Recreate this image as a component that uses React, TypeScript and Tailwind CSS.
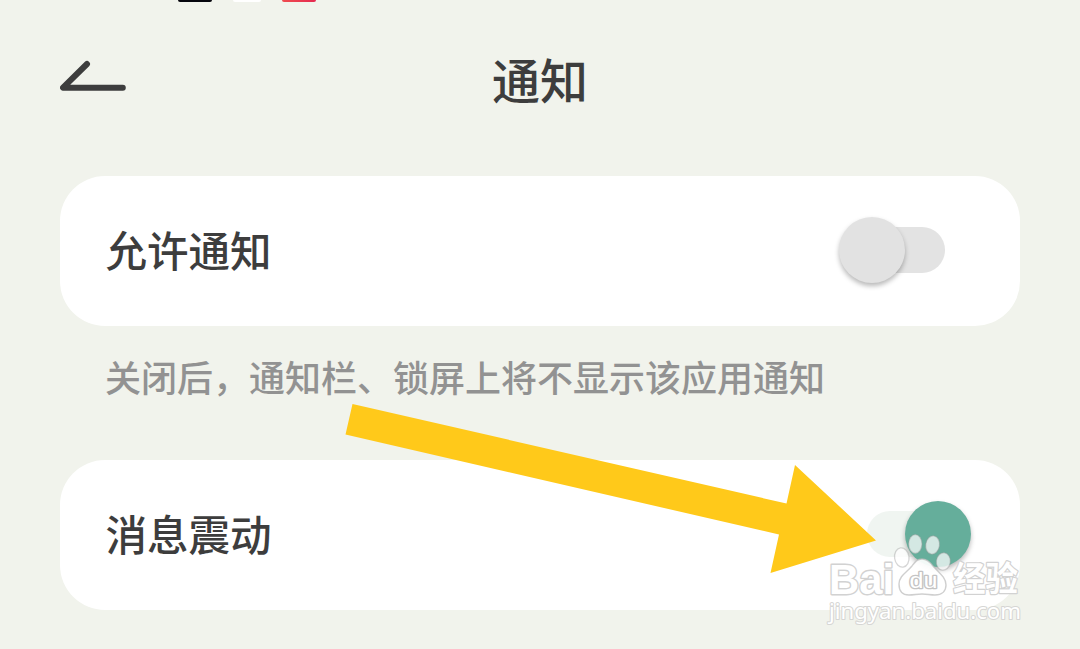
import clsx from 'clsx';

type SwitchProps = {
  on?: boolean;
};

const Switch: React.FC<SwitchProps> = ({ on = false }) => (
  <div
    role="switch"
    aria-checked={on}
    className={clsx(
      'mb-[2px] flex h-[46px] w-[96px] items-center rounded-full',
      on ? 'mr-[57.5px] justify-end bg-[#f0f5f1]' : 'mr-[75.5px] bg-[#e3e3e3]',
    )}
  >
    <div
      className={clsx(
        'size-[66px] shrink-0 rounded-full shadow-[0_3px_5px_rgba(0,0,0,0.28)]',
        on ? '-mr-[8px] bg-[#65ae9b]' : '-ml-[10px] bg-[#e2e2e2]',
      )}
    />
  </div>
);

type SettingCardProps = {
  title: string;
  on?: boolean;
};

const SettingCard: React.FC<SettingCardProps> = ({ title, on }) => (
  <div className="mx-[60px] flex h-[150px] items-center justify-between rounded-[45px] bg-white pl-[45.5px]">
    <span className="mb-[5px] text-[41.5px] leading-[60px] font-medium">{title}</span>
    <Switch on={on} />
  </div>
);

const BackIcon = () => (
  <svg width="66" height="32" viewBox="0 0 66 32" fill="none">
    <path
      d="M27 4 3 27.7H62.8"
      stroke="#3d3d3d"
      strokeWidth="6"
      strokeLinecap="round"
      strokeLinejoin="round"
    />
  </svg>
);

const Arrow = () => (
  <svg
    className="pointer-events-none absolute top-[400px] left-[340px]"
    width="540"
    height="178"
    viewBox="340 400 540 178"
  >
    <path
      d="M352.5 404 786.5 503.5 795 465 876 540.5 770.5 573 779 534.5 345.5 434.5Z"
      fill="#ffc91a"
    />
  </svg>
);

const Watermark = () => (
  <svg
    className="pointer-events-none absolute top-[530px] left-[820px]"
    width="210"
    height="100"
    viewBox="820 530 210 100"
    fill="#fff"
  >
    {/* paw */}
    <g fillOpacity="0.72" stroke="#999" strokeOpacity="0.4" strokeWidth="1.3">
      <ellipse cx="901.8" cy="557.5" rx="7.2" ry="9.7" transform="rotate(-8 901.8 557.5)" />
      <ellipse cx="915.3" cy="544" rx="6.7" ry="9.4" />
      <ellipse cx="932.6" cy="545" rx="6.9" ry="9.2" transform="rotate(9 932.6 545)" />
      <ellipse cx="943.3" cy="561.5" rx="7" ry="8.7" transform="rotate(7 943.3 561.5)" />
    </g>
    <path
      d="M922 559c5 0 8 3 11 7 5 6 13 11 13 19 0 6-4 10-11 10-5 0-8-1-13-1s-8 1-13 1c-7 0-10-4-10-11 0-8 8-12 13-18 3-4 5-7 10-7Z"
      fillOpacity="0.92"
      stroke="#bbb"
      strokeOpacity="0.7"
      strokeWidth="1.4"
    />
    <g
      fontFamily="Liberation Sans, sans-serif"
      fontWeight="700"
      strokeLinejoin="round"
      stroke="#d2d2d2"
      paintOrder="stroke"
    >
      <text
        x="829"
        y="594"
        fontSize="42"
        strokeWidth="2.8"
        textLength="65"
        lengthAdjust="spacingAndGlyphs"
      >
        Bai
      </text>
      <text
        x="909.5"
        y="588"
        fontSize="22"
        fontWeight="400"
        stroke="#c4c4c4"
        strokeWidth="2.6"
        textLength="28"
        lengthAdjust="spacingAndGlyphs"
      >
        du
      </text>
      <text
        x="953"
        y="591"
        fontFamily="Noto Sans CJK SC, sans-serif"
        fontSize="34"
        strokeWidth="2.4"
        textLength="65"
        lengthAdjust="spacingAndGlyphs"
      >
        经验
      </text>
      <text
        x="829"
        y="619"
        fontFamily="Noto Sans, sans-serif"
        fontWeight="400"
        fontSize="21"
        stroke="#d6d6d4"
        strokeWidth="2"
        textLength="192"
        lengthAdjust="spacingAndGlyphs"
      >
        jingyan.baidu.com
      </text>
    </g>
  </svg>
);

const App: React.FC = () => {
  return (
    <div className="relative h-[649px] w-[1080px] overflow-hidden bg-[#f1f3ec] font-['Noto_Sans_CJK_SC',sans-serif] text-[#3d3d3d]">
      {/* STATUS BAR */}
      <div className="flex h-[2px] pl-[178px]">
        <div className="w-[34px] rounded-b-[2px] bg-[#06060e]" />
        <div className="ml-[21px] w-[28px] rounded-b-[2px] bg-white" />
        <div className="ml-[21px] w-[34px] rounded-b-[2px] bg-linear-to-r from-[#ef4b50] to-[#e52850]" />
      </div>

      {/* HEADER */}
      <header className="grid h-[174px] grid-cols-[1fr_auto_1fr] items-start px-[60px]">
        <button type="button" aria-label="返回" className="mt-[58px] w-[66px]">
          <BackIcon />
        </button>
        <h1 className="mt-[41px] text-[48px] leading-[70px] font-medium">通知</h1>
      </header>

      <SettingCard title="允许通知" />
      <p className="mt-[24px] h-[110px] pl-[105px] text-[36px] leading-[52px] font-medium whitespace-nowrap text-[#929292]">
        关闭后，通知栏、锁屏上将不显示该应用通知
      </p>
      <SettingCard title="消息震动" on />

      <Arrow />
      <Watermark />
    </div>
  );
};
export default App;
